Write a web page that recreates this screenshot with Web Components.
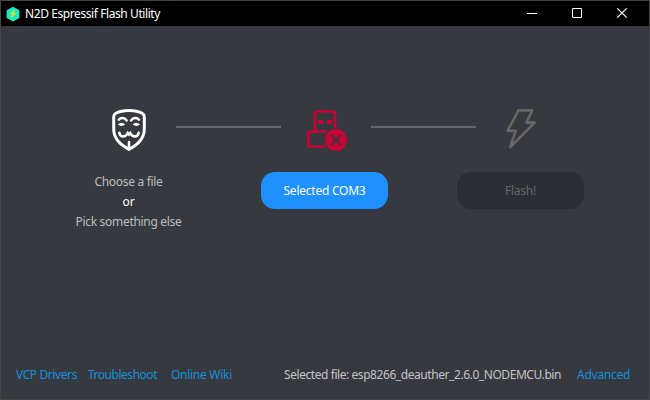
<!DOCTYPE html>
<html lang="en"><head><meta charset="utf-8"><title>N2D Espressif Flash Utility</title>
<style>html,body{margin:0;height:100%;overflow:hidden;background:#36393f}body{font:12px/20px "Noto Sans","Open Sans",sans-serif}</style></head>
<body><flash-window></flash-window>
<script>
const define=(name,html,setup)=>customElements.define(name,class extends HTMLElement{
 connectedCallback(){ if(this.shadowRoot)return; const t=document.createElement('template');t.innerHTML=html;
  this.attachShadow({mode:'open'}).append(t.content.cloneNode(true)); if(setup)setup(this,this.shadowRoot); }
});
// A label whose letter spacing adapts to its design width.
define('fit-label',`<style>:host{display:block;white-space:pre;flex:none}span{display:inline-block}</style><span><slot></slot></span>`,(el,root)=>{
 const w=parseFloat(el.getAttribute('w')),s=root.querySelector('span');
 el.style.width=w+'px';
 const n=el.textContent.length;
 s.style.letterSpacing=((w-s.getBoundingClientRect().width)/n)+'px';
});
define('title-bar',`<style>:host{display:flex;height:25px;background:#000;color:#fff;align-items:center;padding-left:4px}
 .logo{margin-right:4px}.sp{flex:1}.controls{display:flex}.controls svg{display:block}fit-label{line-height:24px}</style>
 <svg class="logo" width="16" height="16" viewBox="0 0 16 16"><path d="M8 .7 14.4 4.2v7.7L8 15.4 1.6 11.9V4.2Z" fill="#1ee6c4"/><path d="M9.800 3.400 4.400 8.800h2.700L5.800 12.500 11.700 7.100H8.800Z" fill="#dce61c"/></svg>
 <fit-label w="135">N2D Espressif Flash Utility</fit-label><div class="sp"></div>
 <div class="controls"><svg width="45" height="25"><path d="M13 12.5h10" stroke="#fff"/></svg><svg width="45" height="25"><path d="M13.5 7.5h9v9h-9z" fill="none" stroke="#fff"/></svg><svg width="45" height="25"><path d="m13.3 7.3 9.4 9.4m0-9.4-9.4 9.4" stroke="#fff" stroke-width="1.2"/></svg></div>`);
define('step-icon',`<style>:host{display:block;width:60px;height:60px;flex:none}svg{display:none}:host([kind=mask]) .mask,:host([kind=usb]) .usb,:host([kind=bolt]) .bolt{display:block}</style>
 <svg class="mask" width="60" height="60" viewBox="-1 0 60 60" fill="none" stroke="#fff" stroke-width="3" stroke-linecap="round"><path d="M29 10.500c-5.500 0-10 1-13.200 2.800q-2.100 1.200-2.100 3.500v12.500c0 8.500 6.500 15.500 15.300 20 8.800-4.500 15.300-11.500 15.300-20V16.800q0-2.300-2.100-3.500C39 11.500 34.500 10.500 29 10.500Z"/><path d="M18.700 19.700c2-2.400 5.700-2.300 8 .8M31 20.500c2.300-3.100 6-3.200 8-.8" stroke-width="2.400"/><path d="M17.700 24.600q3.700-3.600 7.500 0-3.800 2.900-7.500 0ZM32.700 24.600q3.700-3.600 7.500 0-3.700 2.900-7.500 0Z" fill="#fff" stroke="none"/><path d="M19.300 32.800c.4 2.400 1.700 3.700 3.700 3.700 2.100 0 3.700-.8 4.800-3.400l1.200 1.400 1.200-1.400c1.100 2.600 2.700 3.400 4.800 3.400 2 0 3.300-1.300 3.700-3.700M29 42v6.500" stroke-width="2.500"/></svg>
 <svg class="usb" width="60" height="60"><path d="M19.800 31V14q0-2.500 2.500-2.500H37.500q2.500 0 2.500 2.500v17M33 46.500H15q-1.700 0-1.700-1.700V33.500Q13.300 31.500 15.300 31.500H34" fill="none" stroke="#cd0034" stroke-width="2.700"/><path d="M23 20h5v4h-5zM32 20h5v4h-5z" fill="#cd0034"/><circle cx="41" cy="40" r="12.500" fill="#36393f"/><circle cx="41" cy="40" r="11" fill="#cd0034"/><path d="m36.300 35.300 9.400 9.400m0-9.400-9.400 9.400" stroke="#36393f" stroke-width="2.200" stroke-linecap="round"/></svg>
 <svg class="bolt" width="60" height="60"><path d="M23.500 10.400H37.200L31.500 22.600H39.700L15.300 47 20.700 30.700H12.600Z" fill="none" stroke="#666" stroke-width="2.600" stroke-linejoin="round"/></svg>`);
define('step-track',`<style>:host{display:grid;grid-template-columns:77px 119px 76px 124px 60px;align-items:start;padding-left:99px}
 .line{width:105px;height:2px;background:#666;margin-top:26px}</style>
 <step-icon kind="mask"></step-icon><div class="line"></div><step-icon kind="usb"></step-icon><div class="line"></div><step-icon kind="bolt"></step-icon>`);
define('pill-button',`<style>:host{display:flex;box-sizing:border-box;width:127px;height:37px;border-radius:14px;background:#1e90ff;color:#fff;justify-content:center;align-items:center}:host([disabled]){background:#2b2e35;color:#666}</style><slot></slot>`);
define('step-actions',`<style>:host{display:flex;gap:69px;padding-left:65px;margin-top:12px}.choice{width:127px;display:flex;flex-direction:column;align-items:center;color:#bebebe}.or{color:#fff}</style>
 <div class="choice"><fit-label w="68">Choose a file</fit-label><fit-label class="or" w="12">or</fit-label><fit-label w="106">Pick something else</fit-label></div>
 <pill-button><fit-label w="82">Selected COM3</fit-label></pill-button><pill-button disabled><fit-label w="31">Flash!</fit-label></pill-button>`);
define('status-footer',`<style>:host{display:flex;margin-top:auto;padding:0 19px 14px 15px;color:#c4c4c4}.link{color:#1492dc}.b{margin-left:11px}.c{margin-left:14px}.sp{flex:1}.e{margin-left:16px}</style>
 <fit-label class="link" w="61">VCP Drivers</fit-label><fit-label class="link b" w="69">Troubleshoot</fit-label><fit-label class="link c" w="61">Online Wiki</fit-label><div class="sp"></div><fit-label w="277">Selected file: esp8266_deauther_2.6.0_NODEMCU.bin</fit-label><fit-label class="link e" w="53">Advanced</fit-label>`);
define('flash-window',`<style>:host{display:flex;flex-direction:column;box-sizing:border-box;width:650px;height:400px;background:#36393f;border:1px solid #444;cursor:default}step-track{margin-top:74px;margin-left:-1px}step-actions{margin-left:-1px}</style><title-bar></title-bar><step-track></step-track><step-actions></step-actions><status-footer></status-footer>`);
</script></body></html>
